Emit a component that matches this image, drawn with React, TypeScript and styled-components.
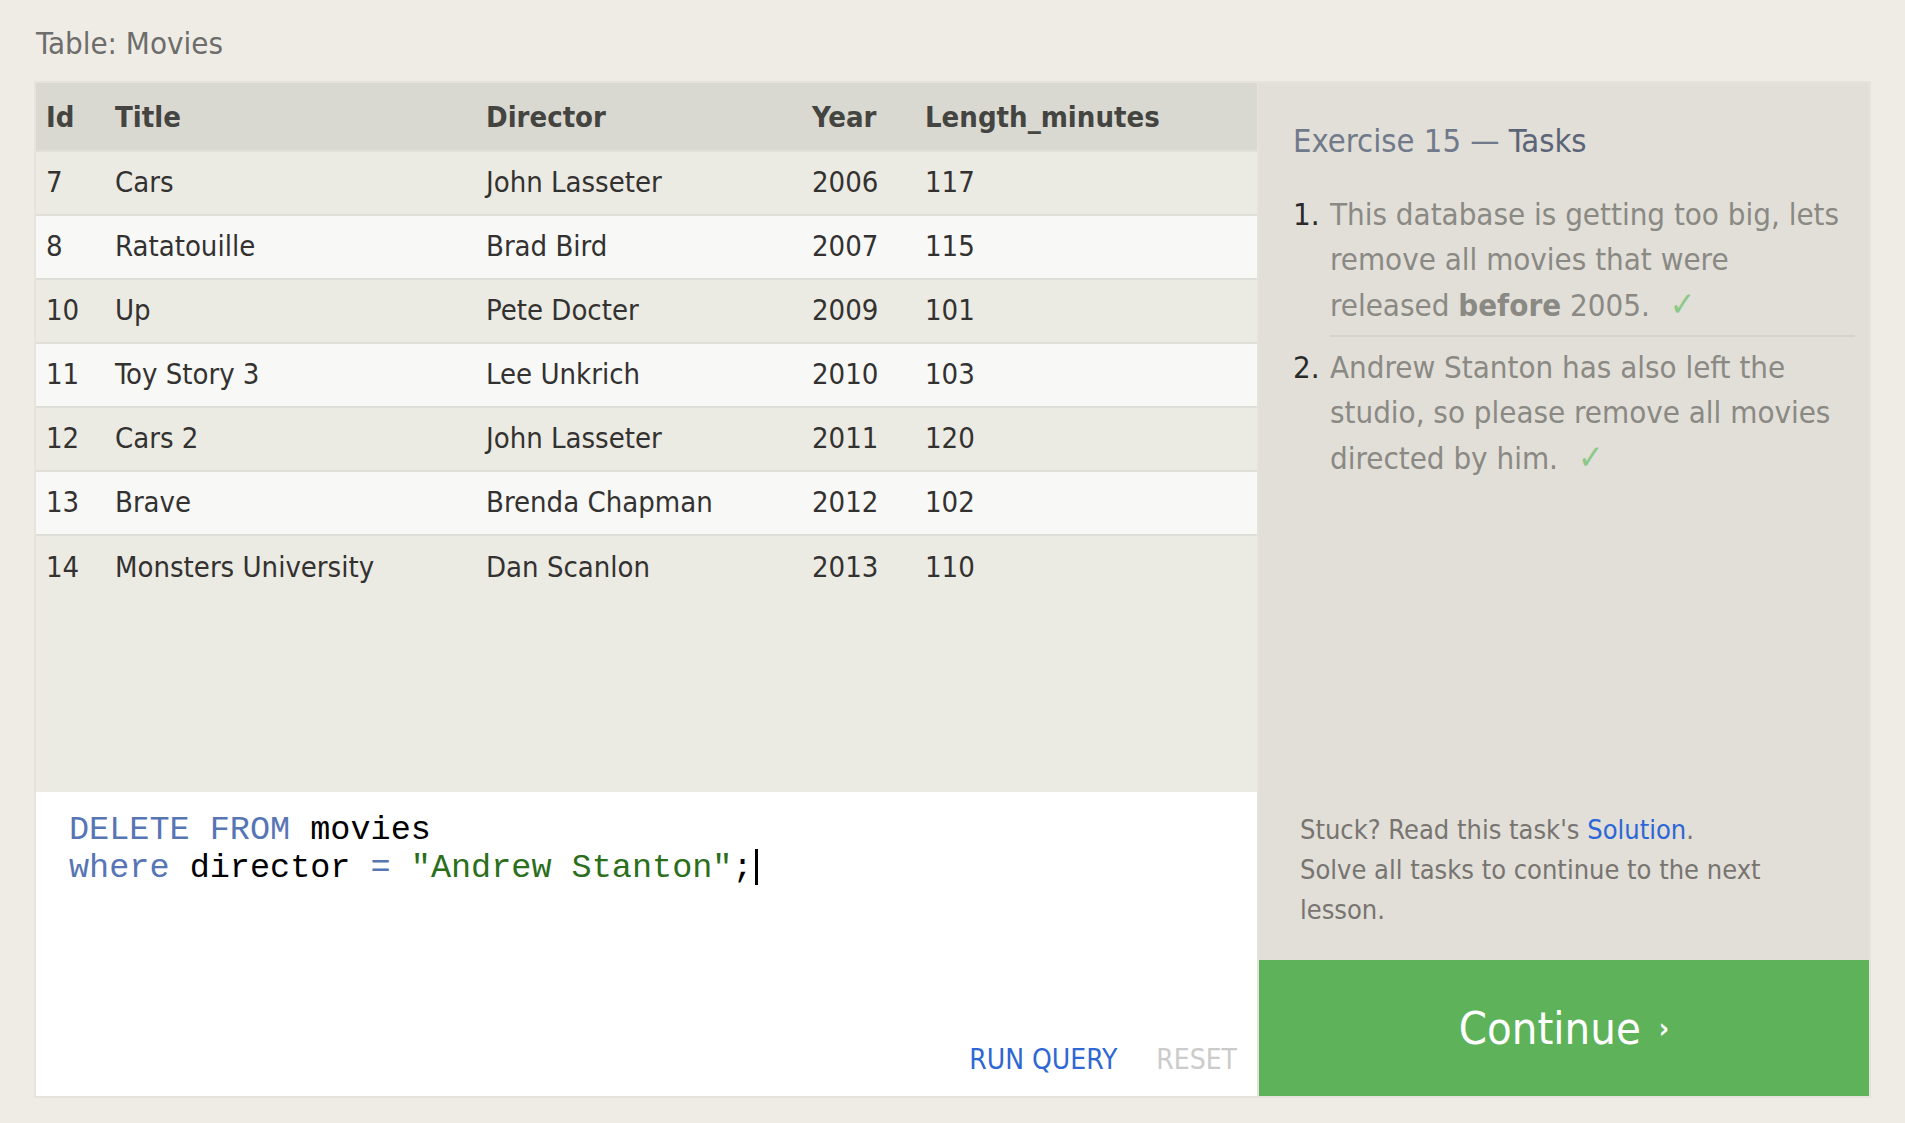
import React from "react";
import styled, { createGlobalStyle } from "styled-components";

const Global = createGlobalStyle`
  html, body { margin: 0; padding: 0; background: #efece6; }
  body { font-family: "DejaVu Sans Condensed", "DejaVu Sans", sans-serif; font-stretch: condensed; }
  * { box-sizing: border-box; }
`;

const Page = styled.div`
  width: 1905px;
  height: 1123px;
  padding: 18px 36px 0 36px;
`;

const Caption = styled.div`
  font-size: 31px;
  color: #6d6d6b;
  height: 65px;
  line-height: 50px;
`;

const Frame = styled.div`
  display: grid;
  grid-template-columns: 1221px 610px;
  column-gap: 2px;
  height: 1013px;
  background: #e4e2db;
  outline: 2px solid #e5e3dc;
`;

const LeftCol = styled.div`
  display: flex;
  flex-direction: column;
  min-height: 0;
`;

const TableArea = styled.div`
  flex: 1;
  background: #ebeae3;
`;

const Table = styled.table`
  width: 100%;
  border-collapse: collapse;
  table-layout: fixed;
  font-size: 29px;
  color: #333231;
`;

const HeadCell = styled.th<{ $w?: number }>`
  width: ${(p) => (p.$w ? `${p.$w}px` : "auto")};
  height: 68px;
  text-align: left;
  font-weight: bold;
  color: #444441;
  background: #d9d9d1;
  padding: 0 10px;
  border-bottom: 2px solid #e0dfd8;
`;

const Row = styled.tr<{ $alt: boolean }>`
  background: ${(p) => (p.$alt ? "#f8f8f7" : "#ebeae3")};
  border-bottom: 2px solid #dfded9;
  &:last-child { border-bottom: none; }
`;

const Cell = styled.td`
  height: 64px;
  padding: 0 10px 2px 10px;
  white-space: nowrap;
`;

const Editor = styled.div`
  height: 304px;
  background: #ffffff;
  display: flex;
  flex-direction: column;
  padding: 19px 20px 20px 33px;
`;

const Code = styled.pre`
  margin: 0;
  flex: 1;
  font-family: "Liberation Mono", "Courier New", monospace;
  font-size: 33.5px;
  line-height: 38px;
  color: #000;
`;

const Tok = styled.span<{ $k: "kw" | "str" | "plain" }>`
  color: ${(p) => (p.$k === "kw" ? "#5775b5" : p.$k === "str" ? "#2b6e1c" : "#000")};
`;

const Caret = styled.span`
  display: inline-block;
  width: 3px;
  height: 36px;
  background: #000;
  vertical-align: -8px;
  margin-left: 2px;
`;

const Actions = styled.div`
  display: flex;
  justify-content: flex-end;
  align-items: center;
  gap: 39px;
`;

const ActionBtn = styled.span<{ $active: boolean }>`
  font-size: 28px;
  color: ${(p) => (p.$active ? "#2f67d4" : "#cbcbcb")};
`;

const Side = styled.div`
  display: flex;
  flex-direction: column;
  background: #e1dfd8;
`;

const SideTop = styled.div`
  flex: 1;
  padding: 30px 14px 0 34px;
`;

const Heading = styled.h2`
  margin: 0 0 23px 0;
  font-weight: normal;
  font-size: 32.5px;
  line-height: 56px;
  color: #717a8b;
  b { color: #5c6477; font-weight: normal; }
`;

const TaskList = styled.ol`
  margin: 0;
  padding: 0;
  list-style: none;
`;

const Task = styled.li`
  display: flex;
  font-size: 31px;
  line-height: 45px;
  color: #8a8984;
  padding-bottom: 7px;
  & + & { border-top: 2px solid #d6d4ca; padding-top: 8px; margin-left: 37px; }
  & + & > span:first-child { margin-left: -37px; }
`;

const Num = styled.span`
  width: 37px;
  flex: none;
  color: #2a2a2a;
`;

const Check = styled.span`
  color: #8cc887;
  font-size: 34px;
  margin-left: 20px;
`;

const Stuck = styled.div`
  padding: 0 70px 30px 41px;
  font-size: 27px;
  line-height: 40px;
  color: #787470;
  a { color: #2d66d6; text-decoration: none; }
`;

const Continue = styled.button`
  height: 136px;
  border: none;
  background: #5eb25a;
  color: #fff;
  font-family: inherit;
  font-stretch: condensed;
  font-size: 45px;
  display: flex;
  align-items: center;
  justify-content: center;
  gap: 18px;
  span { font-size: 28px; font-weight: bold; }
`;

const rows = [
  [7, "Cars", "John Lasseter", 2006, 117],
  [8, "Ratatouille", "Brad Bird", 2007, 115],
  [10, "Up", "Pete Docter", 2009, 101],
  [11, "Toy Story 3", "Lee Unkrich", 2010, 103],
  [12, "Cars 2", "John Lasseter", 2011, 120],
  [13, "Brave", "Brenda Chapman", 2012, 102],
  [14, "Monsters University", "Dan Scanlon", 2013, 110],
];

export default function App() {
  return (
    <Page>
      <Global />
      <Caption>Table: Movies</Caption>
      <Frame>
        <LeftCol>
          <TableArea>
            <Table>
              <thead>
                <tr>
                  <HeadCell $w={69}>Id</HeadCell>
                  <HeadCell $w={371}>Title</HeadCell>
                  <HeadCell $w={326}>Director</HeadCell>
                  <HeadCell $w={113}>Year</HeadCell>
                  <HeadCell>Length_minutes</HeadCell>
                </tr>
              </thead>
              <tbody>
                {rows.map((r, i) => (
                  <Row key={r[0]} $alt={i % 2 === 1}>
                    {r.map((c, j) => (
                      <Cell key={j}>{c}</Cell>
                    ))}
                  </Row>
                ))}
              </tbody>
            </Table>
          </TableArea>
          <Editor>
            <Code>
              <Tok $k="kw">DELETE FROM</Tok> <Tok $k="plain">movies</Tok>
              {"\n"}
              <Tok $k="kw">where</Tok> <Tok $k="plain">director</Tok> <Tok $k="kw">=</Tok>{" "}
              <Tok $k="str">"Andrew Stanton"</Tok>
              <Tok $k="plain">;</Tok>
              <Caret />
            </Code>
            <Actions>
              <ActionBtn $active>RUN QUERY</ActionBtn>
              <ActionBtn $active={false}>RESET</ActionBtn>
            </Actions>
          </Editor>
        </LeftCol>
        <Side>
          <SideTop>
            <Heading>
              Exercise 15 — <b>Tasks</b>
            </Heading>
            <TaskList>
              <Task>
                <Num>1.</Num>
                <span>
                  This database is getting too big, lets remove all movies that were released{" "}
                  <b>before</b> 2005.<Check>✓</Check>
                </span>
              </Task>
              <Task>
                <Num>2.</Num>
                <span>
                  Andrew Stanton has also left the studio, so please remove all movies directed by
                  him.<Check>✓</Check>
                </span>
              </Task>
            </TaskList>
          </SideTop>
          <Stuck>
            Stuck? Read this task's <a href="#">Solution</a>.
            <br />
            Solve all tasks to continue to the next lesson.
          </Stuck>
          <Continue>
            Continue <span>›</span>
          </Continue>
        </Side>
      </Frame>
    </Page>
  );
}
